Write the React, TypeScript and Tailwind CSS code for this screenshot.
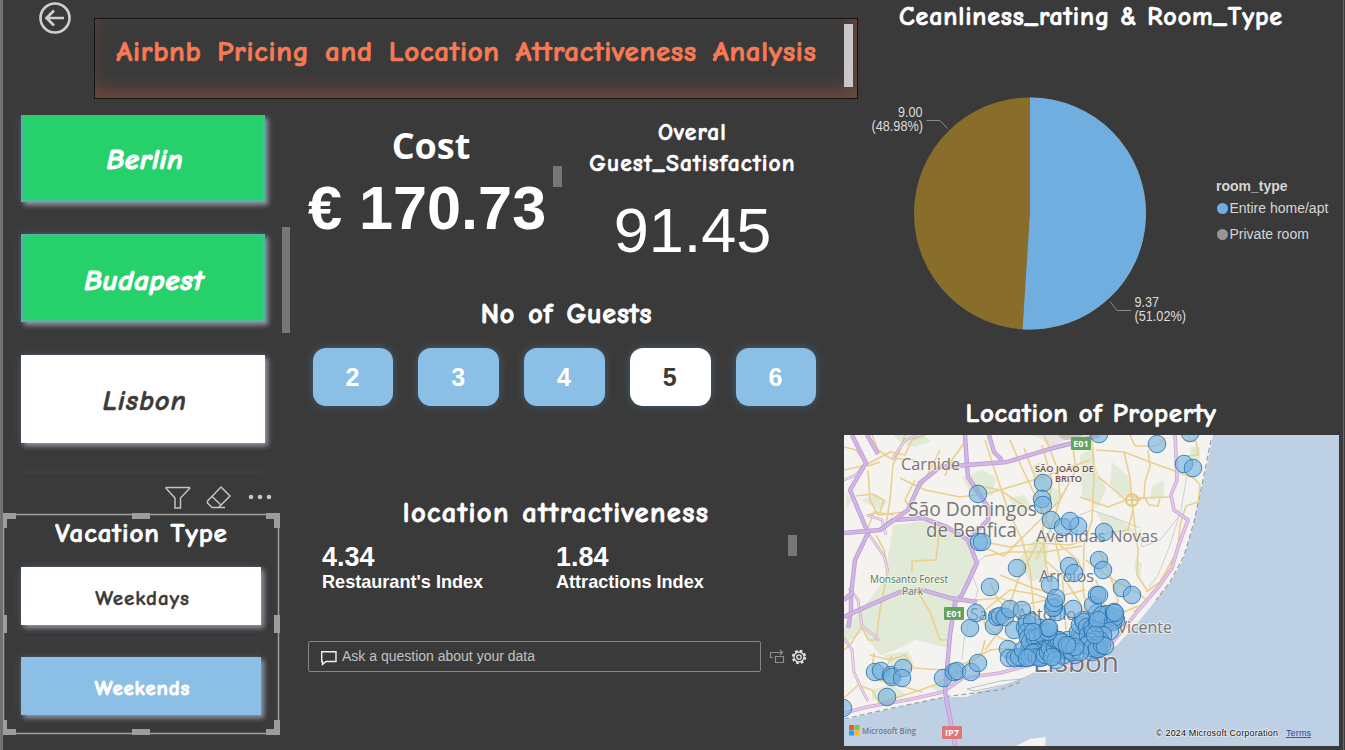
import React from "react";

const COMIC = "[font-variant-ligatures:none] font-['Comic_Sans_MS','Comic_Neue','Open_Sans',sans-serif]";

const tileShadow = "shadow-[3px_3px_5px_rgba(190,195,205,0.65),0_0_9px_rgba(90,125,160,0.35)]";

const CITIES = [
  { name: "Berlin", style: "h-[87px] pl-[4px] pt-[4px] bg-[#26d06b] border-x-2 border-b-2 border-[#51b5a8] text-white text-[29px] font-bold tracking-[0.6px] [-webkit-text-stroke:1.1px]" },
  { name: "Budapest", style: "h-[88px] mt-8 pl-[2px] pt-[5px] bg-[#26d06b] border-2 border-[#51b5a8] text-white text-[29px] font-bold tracking-[0.7px] [-webkit-text-stroke:1.1px]" },
  { name: "Lisbon", style: "h-[88px] mt-[33px] pl-[4px] pt-[3px] bg-white text-[#3a3a3a] text-[28px] font-semibold tracking-[1.2px] [-webkit-text-stroke:0.6px]" },
  { name: "", style: "h-[88px] mt-8 bg-white" },
];

const GUESTS = [2, 3, 4, 5, 6];

const PARKS = [
  "M893 525 L925 521 L950 527 L969 543 L976 562 L962 596 L952 625 L948 648 L915 640 L896 650 L880 655 L862 632 L844 645 L844 628 L860 612 L884 580 L890 545Z",
  "M893 435h30l8 6-16 6-14-4z",
  "M962 478l20-8 14 8-4 18-22-4z",
  "M1018 560l18-22 12 8-2 30 -16 6z",
  "M1040 462l8 22 16 10-8 14-14-14-10-28z",
  "M1080 455l14-8 2 20 10 22-8 18-16-12z",
  "M1112 462l16 14 4 16-12 6-10-14z",
  "M1152 486l12-6 0 16-14 4z",
  "M1190 447h10v14l-8 6z",
  "M1096 512l18 4 20 14-8 6-24-12z",
  "M1008 498l16-3 8 12-12 8z",
  "M862 500l14-6 12 8-10 8z",
  "M884 655l24-4 6 12-20 6z",
  "M872 690l20-6 14 10-20 8-14-2z",
  "M1136 558l6 6-2 14-6-8z",
  "M930 686l20-8 8 4-16 12z",
  "M846 492l6 8-6 10z",
];

const MINOR = [
  "M844 470 L866 465 L890 452 L905 455 L912 440 L925 435",
  "M905 435 L900 450 L893 465 L890 500 L886 525",
  "M844 447 L856 450 L868 466 L880 462",
  "M856 496 L872 494 L884 500 L880 512 L868 515",
  "M872 435 L878 450 L890 458 L915 460",
  "M868 470 L870 500 L878 515 L905 512",
  "M866 533 L874 512 L894 515",
  "M876 535 L884 550 L888 570 L880 610 L876 640 L868 640 L862 626 L850 645 L844 650",
  "M912 572 L912 561 L936 560 L940 524",
  "M915 480 L905 500 L908 505 L925 480 L940 450",
  "M900 478 L925 490 L960 497 L990 493 L1040 478 L1090 460",
  "M945 476 L952 460 L966 440",
  "M965 465 L970 484 L1000 490 L1030 510",
  "M985 440 L994 468 L1008 510 L1022 540 L1030 570 L1034 610",
  "M1010 440 L1022 468 L1040 505 L1055 540 L1062 570 L1066 630",
  "M1024 448 L1034 475 L1042 515 L1045 560 L1054 600",
  "M1042 445 L1052 480 L1046 520 L1034 550 L1018 580 L1008 610",
  "M1044 435 L1058 470 L1060 500 L1050 530 L1036 560",
  "M1072 440 L1076 470 L1060 500 L1030 530 L1004 556 L985 548",
  "M1092 438 L1094 475 L1092 520 L1084 545 L1083 590 L1090 625",
  "M1096 450 L1124 452 L1150 462 L1194 478 L1200 485 L1198 502 L1186 506 L1180 525 L1178 550 L1160 582 L1146 592",
  "M1124 452 L1130 478 L1132 500 L1134 520 L1138 550 L1137 575 L1147 590",
  "M1148 450 L1150 466 L1145 482 L1144 498 L1132 500",
  "M1126 496 L1140 498 L1170 497",
  "M1145 498 L1149 505 L1158 506 L1160 498",
  "M1098 477 L1106 483 L1126 500 L1108 507 L1080 497",
  "M1130 435 L1135 446 L1157 446 L1165 438",
  "M1133 510 L1128 530 L1104 534 L1070 545 L1040 543 L1010 547 L985 542",
  "M985 556 L1010 552 L1045 552 L1082 546",
  "M1086 560 L1110 578 L1140 594 L1146 600 L1134 612",
  "M1000 575 L1030 587 L1060 596 L1085 590",
  "M985 610 L1010 590 L1035 594 L1060 604",
  "M990 582 L998 600 L1015 615 L1028 632",
  "M976 600 L1000 598 L1020 606 L1046 600",
  "M1045 560 L1062 575 L1080 603 L1090 625",
  "M1060 545 L1078 560 L1084 575",
  "M1100 552 L1110 575 L1118 600 L1112 620",
  "M1096 580 L1104 605 L1124 612 L1138 606",
  "M915 587 L930 612 L940 640 L948 640",
  "M874 653 L872 670 L878 680 L895 684 L922 692",
  "M870 655 L890 660 L905 655 L914 668 L945 670 L968 662 L990 650 L1010 648",
  "M892 656 L885 670 L900 675 L912 668",
  "M944 684 L968 665 L982 652 L985 640",
  "M880 703 L905 695 L935 685 L958 670",
  "M844 698 L858 685 L872 690 L880 704",
  "M980 605 L985 625 L1000 638 L1020 645",
  "M985 650 L1000 630 L1008 610",
  "M1184 440 L1196 441 L1198 455 L1187 456",
];

const PINK_MINOR = [
  "M849 588 L858 600 L862 626",
  "M844 638 L852 650 L854 672 L862 690 L868 701",
  "M862 626 L876 637 L879 641",
  "M867 515 L882 520 L886 535",
  "M868 533 L884 556 L888 572",
  "M844 480 L856 475 L866 463",
  "M892 460 L905 440 L918 435",
];

const MAJOR = [
  "M852 435 L866 463 L850 490 L868 533 L855 560 L851 595 L851 612 L848 628",
  "M844 533 L880 530 L893 520 L923 518 L947 527 L968 540 L977 563 L962 595 L955 602 L950 635 L947 668 L945 692 L950 718 L955 746",
  "M965 435 L967 465 L968 477 L990 510 L988 520 L968 540",
  "M880 530 L908 510 L920 483 L940 467 L967 465 L1007 462 L1053 448 L1073 443 L1099 435",
  "M867 435 L878 454",
  "M989 435 L994 452 L1002 460",
  "M844 617 L870 605 L900 592 L923 590 L950 598 L977 602",
  "M844 600 L853 592",
];

const SHORE_ROAD =
  "M844 713 L867 707 L907 700 L943 692 L963 678 L1000 673 L1037 663 L1073 663 L1090 658 L1113 642 L1137 612 L1160 585 L1172 568 L1178 547 L1188 520 L1174 510 L1171 495 L1177 480 L1176 455 L1175 435";

const RAIL = [
  "M1187 475 L1181 510 L1170 545 L1158 575 L1149 587",
  "M1180 515 L1160 540 L1142 547 L1140 530",
  "M1068 520 L1092 510 L1120 520 L1140 528",
  "M985 556 L970 570 L978 590 L964 640 L962 660",
];

const MARKERS: number[][] = [
  [1034, 645], [1040, 643], [1045, 642], [1029, 649], [1036, 648], [1043, 657], [1049, 640], [1052, 651],
  [1058, 654], [1064, 655], [1068, 640], [1075, 655], [1084, 645], [1092, 652], [1099, 649], [1101, 628],
  [1086, 631], [1107, 614], [1040, 628], [1022, 658], [1029, 653], [1041, 633], [1055, 643], [1065, 647],
  [978, 494], [1043, 483], [1042, 499], [1043, 505], [1051, 520], [1063, 527], [1078, 526], [1070, 521],
  [979, 542], [982, 542], [1017, 568], [1069, 566], [1074, 573], [1050, 585], [990, 587],
  [1099, 434], [1157, 444], [1190, 433], [1184, 464], [1193, 468], [1104, 532], [1099, 560], [1103, 570],
  [1122, 588], [1132, 595], [843, 708], [875, 672], [881, 671], [891, 675], [892, 677], [903, 668],
  [902, 678], [887, 697], [943, 678], [954, 672], [957, 671], [971, 672], [978, 663], [970, 628], [976, 613],
  [994, 626], [997, 617], [1000, 616], [1005, 617], [1010, 609], [1022, 610], [1014, 630], [1008, 649],
  [1009, 658], [1015, 658], [1019, 657], [1023, 650], [1025, 627], [1027, 623], [1032, 622], [1027, 632],
  [1028, 638], [1030, 642], [1035, 638], [1038, 637], [1043, 635], [1052, 645], [1047, 648], [1042, 650],
  [1038, 652], [1035, 652], [1030, 657], [1033, 653], [1037, 657], [1040, 658], [1027, 658], [1045, 655],
  [1048, 652], [1050, 648], [1055, 648], [1060, 648], [1063, 650], [1068, 650], [1056, 660], [1052, 657],
  [1053, 638], [1057, 640], [1059, 640], [1062, 642], [1048, 632], [1048, 628], [1049, 628],
  [1072, 652], [1070, 645], [1077, 642], [1080, 635], [1082, 637], [1078, 632], [1080, 625], [1083, 620],
  [1084, 622], [1087, 627], [1088, 635], [1092, 628], [1093, 632], [1097, 623], [1097, 613], [1093, 605],
  [1097, 595], [1099, 595], [1102, 615], [1098, 620], [1116, 620], [1113, 622], [1115, 617], [1114, 612],
  [1115, 613], [1110, 631], [1103, 635], [1100, 640], [1095, 640], [1090, 642], [1097, 645], [1087, 645],
  [1092, 648], [1097, 649], [1102, 645], [1105, 646], [1080, 652], [1075, 647], [1095, 635],
  [1057, 612], [1054, 607], [1053, 608], [1054, 603], [1056, 598], [1073, 609], [1033, 632], [1067, 645],
];

function MapLabel({ x, y, size, children, fill = "#767676", width }: { x: number; y: number; size: number; children: string; fill?: string; width: number }) {
  return (
    <text x={x} y={y} fontSize={size} fill={fill} stroke="#f5f3f0" strokeOpacity="0.75" strokeWidth="2" paintOrder="stroke" textLength={width} lengthAdjust="spacingAndGlyphs">
      {children}
    </text>
  );
}

function PropertyMap() {
  return (
    <svg className="-ml-[14px] block h-[311px] w-[495px] font-['Open_Sans',sans-serif]" viewBox="844 435 495 311">
      <rect x="844" y="435" width="495" height="311" fill="#bed0e4" />
      <path d="M844 435H1213L1208 460L1200 495L1193 527L1183 560L1170 583L1160 595L1140 620L1117 645L1090 661L1060 668L1037 671L1010 684L985 690L966 697L952 697L940 698L890 709L844 720Z" fill="#f5f3f0" />
      <path d="M967 689L1000 681L1022 679L1008 684L975 691Z" fill="#f5f3f0" stroke="#a9b4c2" strokeWidth="0.8" />
      <path d="M1016 746L1030 739L1046 737L1045 746Z" fill="#f5f3f0" />
      <path d="M1030 435H1098L1092 443L1066 440L1050 447L1040 438Z" fill="#e6e3e2" />
      <path d="M1057 435H1084L1076 439L1064 440Z" fill="#d0c4c2" />
      {PARKS.map((d) => <path key={d} d={d} fill="#e0ead6" />)}
      <path d="M1211 440L1202 485L1194 522L1184 556L1170 582L1156 600M844 719L888 709L950 696L1000 690L1020 682" fill="none" stroke="#9aa0a8" strokeWidth="1.2" strokeDasharray="5 3" />
      {RAIL.map((d) => <path key={d} d={d} fill="none" stroke="#cfcfcf" strokeWidth="1" />)}
      {MINOR.map((d) => <path key={d} d={d} fill="none" stroke="#e9d08f" strokeWidth="1.6" strokeLinejoin="round" />)}
      <circle cx="1132" cy="500" r="6" fill="none" stroke="#e6c980" strokeWidth="2" />
      <path d="M1124 500H1141M1132 494V507" stroke="#e6c980" strokeWidth="1.500" />
      {PINK_MINOR.map((d) => (
        <g key={d} fill="none" strokeLinejoin="round">
          <path d={d} stroke="#c9a8d2" strokeWidth="2.8" />
          <path d={d} stroke="#f4e4e4" strokeWidth="1.2" />
        </g>
      ))}
      <path d={SHORE_ROAD} fill="none" stroke="#c9a6d4" strokeWidth="3.6" strokeLinejoin="round" />
      <path d={SHORE_ROAD} fill="none" stroke="#e6c8ea" strokeWidth="2" strokeLinejoin="round" />
      {MAJOR.map((d) => (
        <g key={d} fill="none" strokeLinejoin="round">
          <path d={d} stroke="#b99bd3" strokeWidth="4.4" />
          <path d={d} stroke="#d3b5e8" strokeWidth="2.8" />
        </g>
      ))}

      <MapLabel x={901} y={470} size={16.5} width={59}>Carnide</MapLabel>
      <MapLabel x={908} y={516} size={20} width={129}>São Domingos</MapLabel>
      <MapLabel x={926} y={537} size={20} width={91}>de Benfica</MapLabel>
      <MapLabel x={1036} y={542} size={16.5} width={122}>Avenidas Novas</MapLabel>
      <MapLabel x={1039} y={582} size={16.5} width={55}>Arroios</MapLabel>
      <MapLabel x={970} y={620} size={16.5} width={106}>Santo António</MapLabel>
      <MapLabel x={1086} y={633} size={16.5} width={86}>São Vicente</MapLabel>
      <MapLabel x={1033} y={672} size={28} width={86}>Lisbon</MapLabel>
      <MapLabel x={870} y={583} size={10.5} fill="#4f7f58" width={78}>Monsanto Forest</MapLabel>
      <MapLabel x={902} y={595} size={10.5} fill="#4f7f58" width={21}>Park</MapLabel>
      <g fontWeight="600">
        <MapLabel x={1035} y={472} size={9} fill="#73504a" width={59}>SÃO JOÃO DE</MapLabel>
        <MapLabel x={1055} y={482} size={9} fill="#73504a" width={27}>BRITO</MapLabel>
      </g>
      <g fontSize="9" fontWeight="700" fill="#ffffff" textAnchor="middle">
        <rect x="1071" y="437" width="20" height="13" rx="1" fill="#62a35f" />
        <text x="1081" y="446.500">E01</text>
        <rect x="944" y="607" width="20" height="13" rx="1" fill="#62a35f" />
        <text x="954" y="616.500">E01</text>
        <rect x="942" y="726" width="20" height="13" rx="1" fill="#e27478" />
        <text x="952" y="736">IP7</text>
      </g>

      {MARKERS.map(([x, y], i) => (
        <circle key={i} cx={x} cy={y} r="8.800" fill="#6fafe0" fillOpacity="0.6" stroke="#276fa8" strokeOpacity="0.9" strokeWidth="0.9" />
      ))}

      <rect x="849" y="725" width="5" height="5" fill="#f1562b" />
      <rect x="854.500" y="725" width="5" height="5" fill="#86c23b" />
      <rect x="849" y="730.500" width="5" height="5" fill="#16a4ef" />
      <rect x="854.500" y="730.500" width="5" height="5" fill="#fdba13" />
      <text x="862" y="734" fontSize="9.500" fontWeight="600" fill="#767b84" textLength="54" lengthAdjust="spacingAndGlyphs">Microsoft Bing</text>
      <g fontFamily="Liberation Sans, sans-serif" fontSize="9">
        <text x="1156" y="736" fill="#111111" stroke="#ffffff" strokeOpacity="0.6" strokeWidth="1.500" paintOrder="stroke" textLength="122">© 2024 Microsoft Corporation</text>
        <text x="1286" y="736" fill="#2b48a0" textDecoration="underline" textLength="25">Terms</text>
      </g>
    </svg>
  );
}

function PieChart() {
  const angle = 0.5102 * 2 * Math.PI;
  const cx = 172;
  const cy = 137.5;
  const r = 116;
  const ex = cx + r * Math.sin(angle);
  const ey = cy - r * Math.cos(angle);
  return (
    <svg className="block h-[290px] w-[350px] font-['Liberation_Sans',sans-serif]" viewBox="0 0 350 290">
      <circle cx={cx} cy={cy} r={r} fill="#886d2b" />
      <path d={`M${cx} ${cy}V${cy - r}A${r} ${r} 0 1 1 ${ex} ${ey}Z`} fill="#70aee0" />
      <path d="M68.500 44.500H82L89.500 52.500M252 225.500L259 234.500H273" fill="none" stroke="#8a8a8a" />
      <g fill="#dcdcdc" fontSize="14">
        <text x="40" y="41" textLength="24.500" lengthAdjust="spacingAndGlyphs">9.00</text>
        <text x="13.500" y="55" textLength="51.500" lengthAdjust="spacingAndGlyphs">(48.98%)</text>
        <text x="276.500" y="231" textLength="24.500" lengthAdjust="spacingAndGlyphs">9.37</text>
        <text x="276.500" y="245" textLength="51.500" lengthAdjust="spacingAndGlyphs">(51.02%)</text>
      </g>
    </svg>
  );
}

function Legend() {
  return (
    <div className="mt-[101px] ml-[8px] font-['Liberation_Sans',sans-serif] text-[14px] whitespace-nowrap text-[#d6d6d6]">
      <div className="h-[22px] leading-[18px] font-bold">room_type</div>
      <div className="flex h-[26px] items-start leading-[18px]">
        <span className="mt-[4px] mr-[2px] ml-[0.500px] size-[11px] rounded-full bg-[#70aee0]" />
        <span>Entire home/apt</span>
      </div>
      <div className="flex items-start leading-[18px]">
        <span className="mt-[4px] mr-[2px] ml-[0.500px] size-[11px] rounded-full bg-[#999691]" />
        <span>Private room</span>
      </div>
    </div>
  );
}

function FrameHandles() {
  return (
    <svg className="absolute -top-px left-0 h-[222px] w-[278px]" viewBox="0 0 278 222" fill="none">
      <rect x="0.500" y="1.500" width="275" height="219" stroke="#a0a0a0" strokeWidth="1.500" />
      <g fill="#9d9d9d">
        <path d="M0 0H13V6H4V15H0ZM263 0H277V15H271V6H263ZM0 207H4V216H13V222H0ZM277 207H271V216H263V222H277Z" />
        <rect x="129" y="0" width="18" height="6" />
        <rect x="129" y="216" width="18" height="6" />
        <rect x="0" y="102" width="4" height="18" />
        <rect x="271" y="102" width="6" height="18" />
      </g>
    </svg>
  );
}

function CitySlicer() {
  return (
    <div className="flex h-[358px]">
      <div className="h-[358px] w-[270px] overflow-hidden pl-[18px]">
        {CITIES.map((c) => (
          <div key={c.name} className={`flex w-[244px] items-center justify-center italic ${COMIC} ${tileShadow} ${c.style}`}>
            {c.name}
          </div>
        ))}
      </div>
      <div className="mt-[112px] ml-[9px] h-[106px] w-[8px] bg-[#777675]" />
    </div>
  );
}

function VacationSlicer() {
  return (
    <>
      <div className="flex h-[41px] items-center gap-[15px] pt-[7px] pl-[161px]">
        <svg className="h-[26px] w-[27px]" viewBox="0 0 27 26" fill="none" stroke="#c4c4c4" strokeWidth="1.500">
          <path d="M2.200 3.500H25.500V4.500L16.500 14V24H11V14L2.200 4.500Z" />
        </svg>
        <svg className="-ml-px h-[26px] w-[28px]" viewBox="0 0 28 26" fill="none" stroke="#c4c4c4" strokeWidth="1.500">
          <path d="M16 3L25 12L13.500 23.500H7L2.500 19V17Z M7 12.500L16 21M13 23.500H20" />
        </svg>
        <svg className="h-[26px] w-[25px]" viewBox="0 0 25 26" fill="#c4c4c4">
          <circle cx="3" cy="13" r="2.300" />
          <circle cx="12" cy="13" r="2.300" />
          <circle cx="21" cy="13" r="2.300" />
        </svg>
      </div>
      <div className="relative h-[221px] w-[277px] pl-[18px]">
        <FrameHandles />
        <div className={`flex h-[53px] w-[241px] justify-center pt-[3px] text-[27px] leading-[34px] font-semibold tracking-[0.88px] whitespace-nowrap text-white [-webkit-text-stroke:0.7px] ${COMIC}`}>Vacation Type</div>
        <div className={`flex h-[58px] w-[240px] items-center justify-center bg-white pt-[5px] pl-[3px] text-[21px] font-semibold tracking-[0.9px] text-[#3a3a3a] [-webkit-text-stroke:0.4px] ${COMIC} ${tileShadow}`}>Weekdays</div>
        <div className={`mt-8 flex h-[58px] w-[240px] items-center justify-center bg-[#8cbfe6] pt-[5px] pl-[3px] text-[21px] font-bold tracking-[0.8px] text-white [-webkit-text-stroke:0.9px] ${COMIC} ${tileShadow}`}>Weekends</div>
      </div>
    </>
  );
}

function QuestionBar() {
  return (
    <div className="mt-[49px] ml-[18px] flex h-[31px] items-center">
      <div className="flex h-[31px] w-[453px] items-center rounded-[2px] border border-[#858585] pl-[11px] font-['Liberation_Sans',sans-serif] text-[14px] text-[#c3c1bf]">
        <svg className="mt-[2px] mr-[4px] h-[16px] w-[18px]" viewBox="0 0 18 16" fill="none" stroke="#f0f0f0" strokeWidth="1.400">
          <path d="M1.700 1.700H16V11.500H6L2.500 14.500V11.500H1.700Z" />
        </svg>
        Ask a question about your data
      </div>
      <svg className="ml-[8px] h-[16px] w-[16px]" viewBox="0 0 16 16" fill="none" stroke="#8f8f8f" strokeWidth="1.200">
        <path d="M4 8.500H1.500V3.500H13.500M11 1L13.500 3.500L11 6M6.500 7.500H14.500V13.500H6.500Z" />
      </svg>
      <svg className="ml-[6px] size-[16px]" viewBox="0 0 16 16" fill="none" stroke="#e6e6e6">
        <circle cx="8" cy="8" r="6.300" strokeWidth="1.800" strokeDasharray="2.700 2.248" />
        <circle cx="8" cy="8" r="5" strokeWidth="1.300" />
        <circle cx="8" cy="8" r="2.200" strokeWidth="1.300" />
      </svg>
    </div>
  );
}

function Metrics() {
  return (
    <div className="w-[565px] text-white">
      <div className="flex h-[175px]">
        <div className="w-[263px] pt-[7px] pl-[18px]">
          <div className="h-[48px] w-[246px] text-center font-['Open_Sans',sans-serif] text-[36px] leading-[47px] font-bold">Cost</div>
          <div className="h-[72px] font-['Liberation_Sans',sans-serif] text-[61.200px] leading-[76px] font-bold whitespace-nowrap">€ 170.73</div>
        </div>
        <div className="mt-[51px] h-[21px] w-[9px] bg-[#777675]" />
        <div className="w-[261px] text-center">
          <div className={`pt-[2px] text-[23.500px] leading-[31px] font-semibold tracking-[1.1px] [-webkit-text-stroke:0.6px] ${COMIC}`}>
            Overal
            <br />
            Guest_Satisfaction
          </div>
          <div className="font-['Liberation_Sans',sans-serif] text-[63px] leading-[102px]">91.45</div>
        </div>
      </div>
      <div className={`h-[58px] w-[553px] pt-[5px] text-center text-[28px] leading-[38px] font-bold tracking-[0.8px] [word-spacing:2.5px] [-webkit-text-stroke:0.9px] ${COMIC}`}>No of Guests</div>
      <div className="ml-[22.500px] flex h-[58px] gap-[25px]">
        {GUESTS.map((n) => (
          <div
            key={n}
            className={`flex h-[58px] w-[80.750px] items-center justify-center rounded-[13px] pt-[2px] pr-px font-['Liberation_Sans',sans-serif] text-[25px] font-bold shadow-[0_0_9px_rgba(80,120,150,0.6)] ${n === 5 ? "bg-white text-[#3a3a3a]" : "bg-[#8cbfe6] text-white"}`}
          >
            {n}
          </div>
        ))}
      </div>
      <div className="mt-[84px] h-[102px]">
        <div className={`h-[45px] w-[532px] pt-px text-center text-[28.500px] leading-[43px] font-semibold tracking-[1.4px] [word-spacing:1px] [-webkit-text-stroke:0.8px] ${COMIC}`}>location attractiveness</div>
        <div className="flex font-['Liberation_Sans',sans-serif] font-bold whitespace-nowrap">
          <div className="w-[234px] pt-[3px] pl-[32px]">
            <div className="h-[31px] text-[27px] leading-[38px]">4.34</div>
            <div className="text-[18.100px] leading-[26px]">Restaurant's Index</div>
          </div>
          <div className="w-[264px] pt-[3px] pl-[32px]">
            <div className="h-[31px] text-[27px] leading-[38px]">1.84</div>
            <div className="text-[18.100px] leading-[26px]">Attractions Index</div>
          </div>
          <div className="h-[21px] w-[9px] bg-[#777675]" />
        </div>
      </div>
      <QuestionBar />
    </div>
  );
}

function Header() {
  return (
    <div className="flex h-[115px] w-[855px]">
      <svg className="mt-px ml-[35px] size-[34px]" viewBox="0 0 34 34" fill="none" stroke="#d0cece">
        <circle cx="17" cy="17" r="14.500" strokeWidth="2.600" />
        <path d="M26 17H9M16 9.500L8.500 17L16 24.500" strokeWidth="2.700" />
      </svg>
      <div className="mt-[18px] ml-[22px] flex h-[81px] w-[764px] shrink-0 border border-[#151212] shadow-[inset_-4px_-8px_18px_rgba(190,95,70,0.4)]">
        <div className={`w-[749px] pt-[14px] pr-[6px] text-center text-[29px] leading-[38px] font-semibold tracking-[0.700px] whitespace-nowrap text-[#f87a55] [word-spacing:4.8px] [-webkit-text-stroke:0.7px] ${COMIC}`}>
          Airbnb Pricing and Location Attractiveness Analysis
        </div>
        <div className="mt-[5px] h-[63px] w-[9px] bg-[#c8c8c8]" />
      </div>
    </div>
  );
}

export default function App() {
  return (
    <div className="flex h-[750px] w-[1345px] overflow-hidden bg-[#3a3a3a]">
      <div className="w-[3px] shrink-0 bg-[#727272]" />
      <div className="w-[855px] shrink-0">
        <Header />
        <div className="flex">
          <div className="w-[287px]">
            <CitySlicer />
            <VacationSlicer />
          </div>
          <Metrics />
        </div>
      </div>
      <div className="w-[485px] shrink-0">
        <div className={`h-[76px] w-[466px] text-center text-[26px] leading-[34px] font-semibold tracking-[0.840px] whitespace-nowrap text-white [-webkit-text-stroke:0.7px] ${COMIC}`}>Ceanliness_rating &amp; Room_Type</div>
        <div className="flex h-[319px]">
          <PieChart />
          <Legend />
        </div>
        <div className={`h-[40px] w-[466px] text-center text-[27px] leading-[38px] font-semibold tracking-[0.620px] text-white [-webkit-text-stroke:0.7px] ${COMIC}`}>Location of Property</div>
        <PropertyMap />
      </div>
      <div className="w-px bg-[#666666]" />
    </div>
  );
}
